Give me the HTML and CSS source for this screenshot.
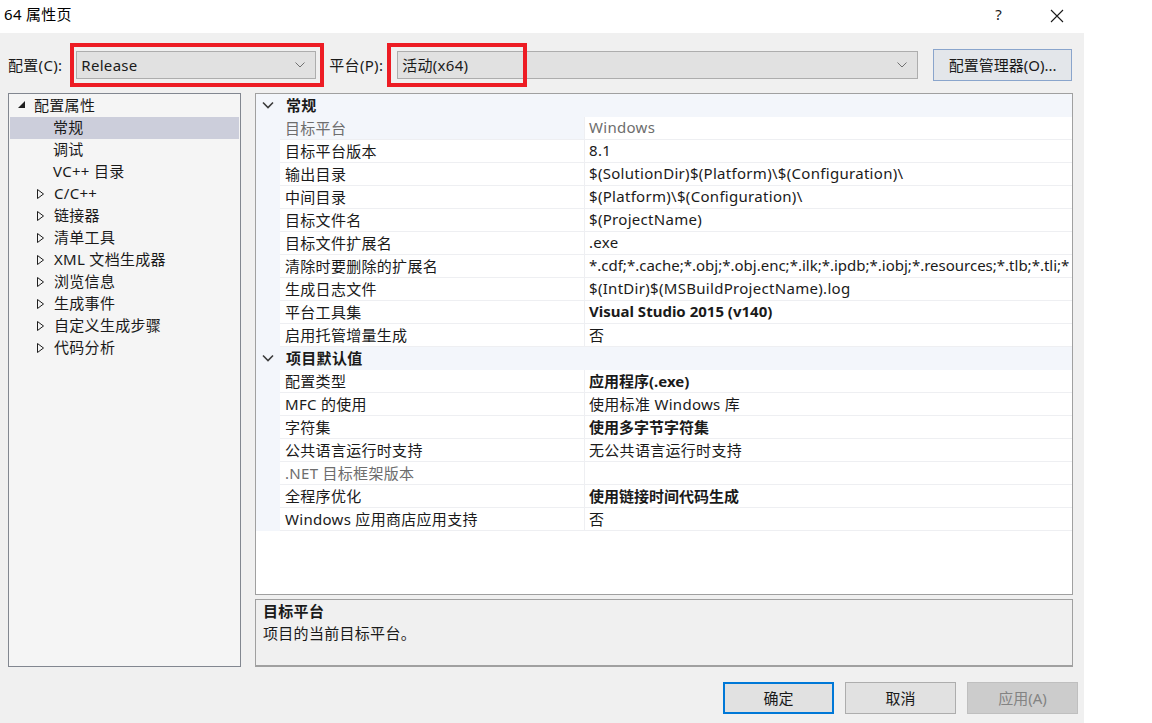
FILE: index.html
```html
<!DOCTYPE html>
<html lang="zh-CN">
<head>
<meta charset="utf-8">
<title>64 属性页</title>
<link rel="stylesheet" href="styles.css">
</head>
<body>
<div class="titlebar">
  <span class="title">64 属性页</span>
  <span class="tb-help">?</span>
  <span class="tb-close"><svg width="14" height="14" viewBox="0 0 14 14"><path d="M1 1L13 13M13 1L1 13" stroke="#1a1a1a" stroke-width="1.1" fill="none"/></svg></span>
</div>
<div class="dialog">
  <div class="toprow">
    <span class="lbl">配置(C):</span>
    <div class="combo combo-cfg"><span>Release</span><svg class="chev" width="10" height="6" viewBox="0 0 10 6"><path d="M0.5 0.5L5 5L9.5 0.5" stroke="#707070" stroke-width="1" fill="none"/></svg></div>
    <span class="lbl lbl-plat">平台(P):</span>
    <div class="combo combo-plat"><span>活动(x64)</span><svg class="chev" width="10" height="6" viewBox="0 0 10 6"><path d="M0.5 0.5L5 5L9.5 0.5" stroke="#707070" stroke-width="1" fill="none"/></svg></div>
    <button class="btn-mgr">配置管理器(O)...</button>
  </div>
  <div class="redbox red-cfg"></div>
  <div class="redbox red-plat"></div>
  <div class="main">
    <div class="tree">
      <div class="ti root"><svg class="tri" width="8" height="8" viewBox="0 0 8 8"><path d="M7 0L7 7L0 7Z" fill="#1e1e1e"/></svg><span>配置属性</span></div>
      <div class="ti leaf sel"><span>常规</span></div>
      <div class="ti leaf"><span>调试</span></div>
      <div class="ti leaf"><span>VC++ 目录</span></div>
      <div class="ti node"><svg class="tri" width="8" height="10" viewBox="0 0 8 10"><path d="M0.5 0.5L6.5 5L0.5 9.5Z" fill="none" stroke="#1e1e1e" stroke-width="1"/></svg><span>C/C++</span></div>
      <div class="ti node"><svg class="tri" width="8" height="10" viewBox="0 0 8 10"><path d="M0.5 0.5L6.5 5L0.5 9.5Z" fill="none" stroke="#1e1e1e" stroke-width="1"/></svg><span>链接器</span></div>
      <div class="ti node"><svg class="tri" width="8" height="10" viewBox="0 0 8 10"><path d="M0.5 0.5L6.5 5L0.5 9.5Z" fill="none" stroke="#1e1e1e" stroke-width="1"/></svg><span>清单工具</span></div>
      <div class="ti node"><svg class="tri" width="8" height="10" viewBox="0 0 8 10"><path d="M0.5 0.5L6.5 5L0.5 9.5Z" fill="none" stroke="#1e1e1e" stroke-width="1"/></svg><span>XML 文档生成器</span></div>
      <div class="ti node"><svg class="tri" width="8" height="10" viewBox="0 0 8 10"><path d="M0.5 0.5L6.5 5L0.5 9.5Z" fill="none" stroke="#1e1e1e" stroke-width="1"/></svg><span>浏览信息</span></div>
      <div class="ti node"><svg class="tri" width="8" height="10" viewBox="0 0 8 10"><path d="M0.5 0.5L6.5 5L0.5 9.5Z" fill="none" stroke="#1e1e1e" stroke-width="1"/></svg><span>生成事件</span></div>
      <div class="ti node"><svg class="tri" width="8" height="10" viewBox="0 0 8 10"><path d="M0.5 0.5L6.5 5L0.5 9.5Z" fill="none" stroke="#1e1e1e" stroke-width="1"/></svg><span>自定义生成步骤</span></div>
      <div class="ti node"><svg class="tri" width="8" height="10" viewBox="0 0 8 10"><path d="M0.5 0.5L6.5 5L0.5 9.5Z" fill="none" stroke="#1e1e1e" stroke-width="1"/></svg><span>代码分析</span></div>
    </div>
    <div class="right">
      <div class="grid">
        <div class="cat"><svg class="cchev" width="12" height="8" viewBox="0 0 12 8"><path d="M1 1.5L6 6.5L11 1.5" stroke="#3c3c3c" stroke-width="1.6" fill="none"/></svg><span>常规</span></div>
        <div class="row selrow"><span class="mg"></span><span class="nm dis">目标平台</span><span class="vl dis">Windows</span></div>
        <div class="row"><span class="mg"></span><span class="nm">目标平台版本</span><span class="vl">8.1</span></div>
        <div class="row"><span class="mg"></span><span class="nm">输出目录</span><span class="vl">$(SolutionDir)$(Platform)\$(Configuration)\</span></div>
        <div class="row"><span class="mg"></span><span class="nm">中间目录</span><span class="vl">$(Platform)\$(Configuration)\</span></div>
        <div class="row"><span class="mg"></span><span class="nm">目标文件名</span><span class="vl">$(ProjectName)</span></div>
        <div class="row"><span class="mg"></span><span class="nm">目标文件扩展名</span><span class="vl">.exe</span></div>
        <div class="row"><span class="mg"></span><span class="nm">清除时要删除的扩展名</span><span class="vl tight">*.cdf;*.cache;*.obj;*.obj.enc;*.ilk;*.ipdb;*.iobj;*.resources;*.tlb;*.tli;*</span></div>
        <div class="row"><span class="mg"></span><span class="nm">生成日志文件</span><span class="vl">$(IntDir)$(MSBuildProjectName).log</span></div>
        <div class="row"><span class="mg"></span><span class="nm">平台工具集</span><span class="vl b">Visual Studio 2015 (v140)</span></div>
        <div class="row"><span class="mg"></span><span class="nm">启用托管增量生成</span><span class="vl">否</span></div>
        <div class="cat"><svg class="cchev" width="12" height="8" viewBox="0 0 12 8"><path d="M1 1.5L6 6.5L11 1.5" stroke="#3c3c3c" stroke-width="1.6" fill="none"/></svg><span>项目默认值</span></div>
        <div class="row"><span class="mg"></span><span class="nm">配置类型</span><span class="vl b">应用程序(.exe)</span></div>
        <div class="row"><span class="mg"></span><span class="nm">MFC 的使用</span><span class="vl">使用标准 Windows 库</span></div>
        <div class="row"><span class="mg"></span><span class="nm">字符集</span><span class="vl b">使用多字节字符集</span></div>
        <div class="row"><span class="mg"></span><span class="nm">公共语言运行时支持</span><span class="vl">无公共语言运行时支持</span></div>
        <div class="row"><span class="mg"></span><span class="nm dis">.NET 目标框架版本</span><span class="vl"></span></div>
        <div class="row"><span class="mg"></span><span class="nm">全程序优化</span><span class="vl b">使用链接时间代码生成</span></div>
        <div class="row"><span class="mg"></span><span class="nm">Windows 应用商店应用支持</span><span class="vl">否</span></div>
      </div>
      <div class="desc">
        <div class="desc-title">目标平台</div>
        <div class="desc-text">项目的当前目标平台。</div>
      </div>
    </div>
  </div>
  <div class="buttons">
    <button class="btn btn-ok">确定</button>
    <button class="btn">取消</button>
    <button class="btn btn-dis">应用(A)</button>
  </div>
</div>
</body>
</html>
```

FILE: styles.css
```css
* { box-sizing: border-box; }
html, body { margin: 0; padding: 0; background: #ffffff; }
body {
  width: 1152px;
  height: 723px;
  overflow: hidden;
  font-family: "Noto Sans", "Noto Sans CJK SC", sans-serif;
  font-size: 15px;
  letter-spacing: 0.3px;
  color: #1a1a1a;
}
.titlebar {
  height: 33px;
  display: flex;
  align-items: center;
  padding-left: 4px;
  padding-bottom: 6px;
  position: relative;
}
.title { font-size: 15px; color: #000; }
.tb-help {
  margin-left: auto;
  margin-right: 48px;
  font-size: 15px;
  color: #1a1a1a;
}
.tb-close { margin-right: 88px; display: flex; margin-top: 4px; }
.dialog {
  position: relative;
  width: 1084px;
  height: 690px;
  background: #f0f0f0;
  padding: 16px 0 0 8px;
  display: flex;
  flex-direction: column;
}
.toprow {
  display: flex;
  align-items: center;
  height: 32px;
}
.lbl { white-space: nowrap; padding-bottom: 2px; }
.combo {
  height: 28px;
  border: 1px solid #adadad;
  background: #e1e1e1;
  display: flex;
  align-items: center;
  padding-left: 4px;
  padding-bottom: 1px;
  position: relative;
}
.combo .chev { margin-left: auto; margin-right: 10px; margin-top: 1px; }
.combo-cfg { width: 240px; margin-left: 14px; }
.lbl-plat { margin-left: 13px; }
.combo-plat { width: 521px; margin-left: 14px; }
.btn-mgr {
  margin-left: 15px;
  width: 139px;
  height: 32px;
  border: 1px solid #8aa5cc;
  background: #e3e6ea;
  font: inherit;
  color: #1a1a1a;
  padding: 0 0 2px 0;
}
.redbox {
  position: absolute;
  top: 10px;
  height: 44px;
  border: 4px solid #ed1c24;
}
.red-cfg { left: 70px; width: 254px; }
.red-plat { left: 387px; width: 140px; }
.main {
  display: flex;
  margin-top: 12px;
  gap: 14px;
  height: 574px;
}
.tree {
  width: 233px;
  height: 574px;
  border: 1px solid #828790;
  background: #f5f5f5;
  padding: 1px 1px 0 1px;
}
.ti {
  height: 22px;
  display: flex;
  align-items: center;
  white-space: nowrap;
  padding-bottom: 3px;
}
.ti.root { padding-left: 8px; }
.ti.root .tri { margin-right: 8px; margin-top: 1px; }
.ti.leaf { padding-left: 43px; }
.ti.node { padding-left: 27px; }
.ti.node .tri { margin-right: 9px; margin-top: 2px; }
.ti.sel { background: #cccedb; }
.right {
  width: 818px;
  display: flex;
  flex-direction: column;
  gap: 4px;
}
.grid {
  height: 502px;
  border: 1px solid #a0a0a0;
  background: #ffffff;
  overflow: hidden;
}
.cat {
  height: 23px;
  background: #f3f6fb;
  display: flex;
  align-items: center;
  font-weight: bold;
  padding-left: 6px;
  padding-bottom: 3px;
}
.cat .cchev { margin-right: 12px; margin-top: 2px; }
.row {
  height: 23px;
  display: flex;
  align-items: stretch;
  white-space: nowrap;
}
.mg { width: 24px; flex: none; background: #f3f6fb; }
.nm {
  width: 305px;
  flex: none;
  padding-left: 5px;
  padding-bottom: 2px;
  display: flex;
  align-items: center;
  border-bottom: 1px solid #eeeff2;
  border-right: 1px solid #eeeff2;
}
.vl {
  flex: 1;
  padding-left: 4px;
  padding-bottom: 2px;
  display: flex;
  align-items: center;
  overflow: hidden;
  border-bottom: 1px solid #eeeff2;
}
.vl.tight { letter-spacing: 0; }
.selrow .nm { background: #f3f6fb; }
.dis { color: #6d6d6d; }
.b { font-weight: bold; letter-spacing: 0; }
.desc {
  height: 68px;
  border: 1px solid #a0a0a0;
  border-bottom-width: 2px;
  background: #f0f0f0;
  padding: 0 7px;
}
.desc-title { font-weight: bold; line-height: 22px; }
.desc-text { line-height: 22px; }
.buttons {
  display: flex;
  justify-content: flex-end;
  gap: 11px;
  margin-top: 15px;
  padding-right: 6px;
}
.btn {
  width: 111px;
  height: 32px;
  border: 1px solid #adadad;
  background: #e1e1e1;
  font: inherit;
  color: #1a1a1a;
  padding: 0 0 2px 0;
}
.btn-ok { border: 2px solid #0078d7; }
.btn-dis { background: #cccccc; border-color: #bfbfbf; color: #838383; }
```
